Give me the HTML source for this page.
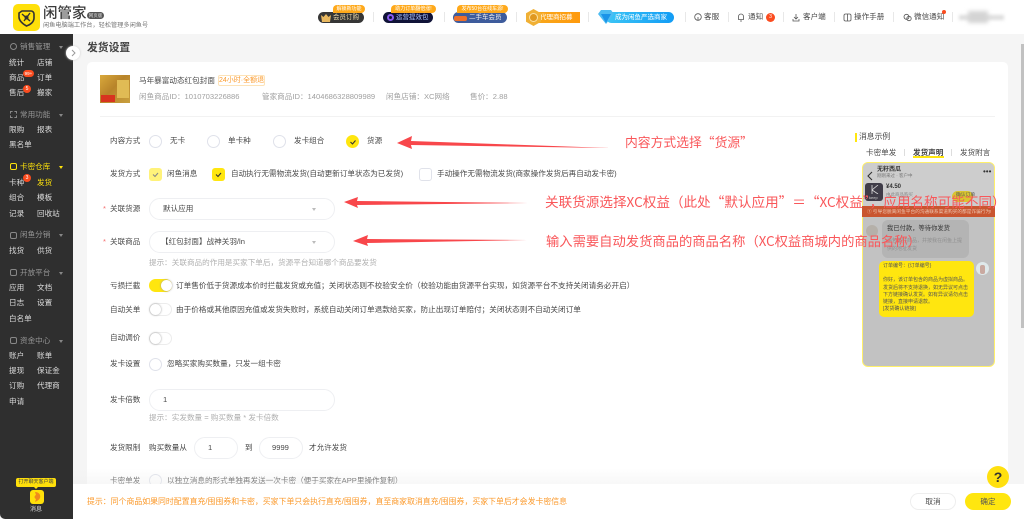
<!DOCTYPE html>
<html lang="zh"><head><meta charset="utf-8"><title>发货设置</title>
<style>
*{box-sizing:border-box;margin:0;padding:0}
html,body{width:1024px;height:519px;overflow:hidden;background:#f5f5f5}
body{position:relative;font-family:"Liberation Sans","Noto Sans CJK SC",sans-serif;font-size:7.6px;color:#484848;filter:blur(.3px)}
.a,.t{position:absolute}
.t{white-space:nowrap;line-height:10px}
.s{color:#b0b0b0}.g{color:#a0a0a0}
.side .t{color:#dcdcdc}
.side .h{color:#969696}
.car{position:absolute;width:0;height:0;border-left:2.5px solid transparent;border-right:2.5px solid transparent;border-top:3px solid #888}
.r{position:absolute;width:13px;height:13px;border-radius:50%;border:1px solid #dfe1ea;background:#fff}
.c{position:absolute;width:13px;height:13px;border-radius:3px}
.c svg,.r svg{position:absolute;left:2px;top:2px}
.i{position:absolute;height:22px;border:1px solid #eeeff2;border-radius:11px;background:#fff}
.sw{position:absolute;width:23px;height:13px;border-radius:7px;border:1px solid #ececec;background:#fff}
.sw b{position:absolute;left:0;top:0;width:11px;height:11px;border-radius:50%;background:#fff;box-shadow:0 0 2px #999}
.sw.on{background:#ffe60f;border-color:#ffe60f}.sw.on b{left:11px}
.sep{position:absolute;top:12px;width:1px;height:10px;background:#e8e8e8}
.tag{position:absolute;height:8px;border-radius:4px 4px 4px 0;background:#ffa91a;color:#fff;font-size:5px;line-height:8px;text-align:center;white-space:nowrap}
.pill{position:absolute;height:11px;border-radius:6px;color:#eee;font-size:6.5px;line-height:11px;white-space:nowrap}
.red{color:#f9575a;font-family:"Noto Sans CJK SC",sans-serif;font-size:13.4px;line-height:16px;position:absolute;white-space:nowrap}
.car2{position:absolute;width:0;height:0;border-left:2.5px solid transparent;border-right:2.5px solid transparent;border-top:3px solid #bbb}
</style></head><body>

<!-- header -->
<div class="a" style="left:0;top:0;width:1024px;height:34px;background:#fff"></div>
<div class="a" style="left:13px;top:4px;width:27px;height:27px;border-radius:5px;background:#ffe00a"></div>
<svg class="a" style="left:17px;top:8px" width="19" height="19" viewBox="0 0 19 19" fill="none" stroke="#333" stroke-width="1.6"><path d="M5 3h9a3 3 0 0 1 3 3v4c0 4-4 7-7.500 8C6 16 2 13 2 9V5Z"/><path d="M5 6l8 7M13 5l-6 8" stroke-width="1.400"/><circle cx="9.500" cy="9.500" r="2" fill="#333" stroke="none"/></svg>
<div class="t" style="left:43px;top:5px;font-size:14.500px;line-height:18px;color:#3a3a3a;font-weight:500">闲管家</div>
<div class="a" style="left:87px;top:12px;width:17px;height:7px;border-radius:4px;background:#555;color:#ddd;font-size:4.500px;line-height:7px;text-align:center">网页版</div>
<div class="t" style="left:43px;top:21px;font-size:6.200px;color:#777">闲鱼电脑端工作台，轻松管理多闲鱼号</div>

<div class="pill" style="left:318px;top:12px;width:46px;background:#363636;padding-left:15px;color:#e8d5a8">会员订购</div>
<svg class="a" style="left:321px;top:14px" width="10" height="8" viewBox="0 0 10 8"><path d="M0 1l2.500 2L5 0l2.500 3L10 1 9 8H1Z" fill="#e8b860"/></svg>
<div class="tag" style="left:333px;top:5px;width:32px">解锁新功能</div>
<div class="sep" style="left:373px"></div>
<div class="pill" style="left:383px;top:12px;width:50px;background:#101338;padding-left:13px;color:#a9c4ff">运营提效包</div>
<div class="a" style="left:387px;top:14px;width:7px;height:7px;border-radius:50%;border:2px solid #8a5cf0"></div>
<div class="tag" style="left:391px;top:5px;width:45px">助力订单翻倍涨!</div>
<div class="sep" style="left:444px"></div>
<div class="pill" style="left:453px;top:12px;width:54px;background:#3e5c9c;padding-left:16px">二手车会员</div>
<div class="a" style="left:454px;top:16px;width:13px;height:5px;border-radius:2px;background:#ee6f2a"></div>
<div class="tag" style="left:457px;top:5px;width:51px">发布50台在线车源!</div>
<div class="sep" style="left:516px"></div>
<div class="a" style="left:533px;top:12px;width:47px;height:11px;background:linear-gradient(90deg,#f7a81c,#ff9a0d);color:#fff;font-size:6.500px;line-height:11px;padding-left:7px;white-space:nowrap">代理商招募</div>
<svg class="a" style="left:525px;top:9px" width="17" height="17" viewBox="0 0 17 17"><path d="M8.500 0l7.500 4.200v8.600L8.500 17 1 12.800V4.200Z" fill="#f0b035"/><circle cx="8.500" cy="8.500" r="4" fill="#e09820" stroke="#fbe1a5"/></svg>
<div class="sep" style="left:588px"></div>
<div class="a" style="left:606px;top:12px;width:68px;height:11px;border-radius:6px;background:linear-gradient(90deg,#3cc5f5,#129cf5);color:#fff;font-size:6.500px;line-height:11px;padding-left:9px;white-space:nowrap">成为闲鱼严选商家</div>
<svg class="a" style="left:598px;top:10px" width="16" height="14" viewBox="0 0 16 14"><path d="M3 0h10l3 4-8 10L0 4Z" fill="#4dbcf2"/><path d="M3 4h10L8 13Z" fill="#1b94e8"/></svg>
<div class="sep" style="left:685px"></div>

<svg class="a" style="left:694px;top:13px" width="8" height="9" viewBox="0 0 8 9" fill="none" stroke="#555" stroke-width=".8"><circle cx="4" cy="4" r="3.300"/><path d="M4 4v3"/></svg>
<div class="t" style="left:704px;top:12px;font-size:7.600px">客服</div>
<div class="sep" style="left:728px"></div>
<svg class="a" style="left:737px;top:13px" width="8" height="9" viewBox="0 0 8 9" fill="none" stroke="#555" stroke-width=".8"><path d="M1.500 6.500V3.500a2.500 2.500 0 0 1 5 0v3ZM3 8h2"/></svg>
<div class="t" style="left:748px;top:12px">通知</div>
<div class="a" style="left:766px;top:13px;width:9px;height:9px;border-radius:50%;background:#fb4c1f;color:#fff;font-size:5px;line-height:9px;text-align:center">3</div>
<div class="sep" style="left:783px"></div>
<svg class="a" style="left:792px;top:13px" width="8" height="9" viewBox="0 0 8 9" fill="none" stroke="#555" stroke-width=".8"><path d="M4 1v5M2 4l2 2 2-2M1 6v2h6V6"/></svg>
<div class="t" style="left:803px;top:12px">客户端</div>
<div class="sep" style="left:834px"></div>
<svg class="a" style="left:843px;top:13px" width="9" height="9" viewBox="0 0 9 9" fill="none" stroke="#555" stroke-width=".8"><rect x="1" y="1" width="7" height="7" rx="1.500"/><path d="M4.500 1v7"/></svg>
<div class="t" style="left:854px;top:12px">操作手册</div>
<div class="sep" style="left:893px"></div>
<svg class="a" style="left:903px;top:13px" width="9" height="9" viewBox="0 0 9 9" fill="none" stroke="#555" stroke-width=".8"><circle cx="3.500" cy="3.800" r="2.500"/><circle cx="6" cy="5.500" r="2.200"/></svg>
<div class="t" style="left:914px;top:12px">微信通知</div>
<div class="a" style="left:942px;top:10px;width:4px;height:4px;border-radius:50%;background:#fb4c1f"></div>
<div class="sep" style="left:952px"></div>
<div class="a" style="left:959px;top:15px;width:45px;height:5px;background:#ddd;filter:blur(1.500px)"></div>
<div class="a" style="left:968px;top:11px;width:20px;height:12px;background:#d4d4d4;filter:blur(2px)"></div>

<!-- sidebar -->
<div class="a side" style="left:0;top:34px;width:73px;height:485px;background:#2f2f2f;border-bottom-left-radius:5px">
</div>
<div class="side">
<div class="a" style="left:10px;top:43px;width:7px;height:7px;border:1px solid #888;border-radius:50%"></div>
<div class="t h" style="left:20px;top:42px">销售管理</div><div class="car" style="left:59px;top:46px"></div>
<div class="t" style="left:9px;top:58px">统计</div><div class="t" style="left:37px;top:58px">店铺</div>
<div class="t" style="left:9px;top:73px">商品</div><div class="t" style="left:37px;top:73px">订单</div>
<div class="t" style="left:9px;top:88px">售后</div><div class="t" style="left:37px;top:88px">搬家</div>
<div class="a" style="left:23px;top:70px;width:11px;height:7px;border-radius:4px;background:#fb4c1f;color:#fff;font-size:4.500px;line-height:7px;text-align:center">99+</div>
<div class="a" style="left:23px;top:85px;width:8px;height:8px;border-radius:50%;background:#fb4c1f;color:#fff;font-size:5px;line-height:8px;text-align:center">5</div>

<div class="a" style="left:10px;top:111px;width:7px;height:7px;border:1px dashed #888"></div>
<div class="t h" style="left:20px;top:110px">常用功能</div><div class="car" style="left:59px;top:114px"></div>
<div class="t" style="left:9px;top:125px">限购</div><div class="t" style="left:37px;top:125px">报表</div>
<div class="t" style="left:9px;top:140px">黑名单</div>

<div class="a" style="left:10px;top:163px;width:7px;height:7px;border:1px solid #ffe30b;border-radius:2px"></div>
<div class="t" style="left:20px;top:162px;color:#ffe30b">卡密仓库</div><div class="car" style="left:59px;top:166px;border-top-color:#ffe30b"></div>
<div class="t" style="left:9px;top:178px">卡种</div><div class="t" style="left:37px;top:178px;color:#ffe30b">发货</div>
<div class="a" style="left:23px;top:174px;width:8px;height:8px;border-radius:50%;background:#fb4c1f;color:#fff;font-size:5px;line-height:8px;text-align:center">3</div>
<div class="t" style="left:9px;top:193px">组合</div><div class="t" style="left:37px;top:193px">模板</div>
<div class="t" style="left:9px;top:209px">记录</div><div class="t" style="left:37px;top:209px">回收站</div>

<div class="a" style="left:10px;top:232px;width:7px;height:7px;border:1px solid #888;border-radius:2px"></div>
<div class="t h" style="left:20px;top:230px">闲鱼分销</div><div class="car" style="left:59px;top:234px"></div>
<div class="t" style="left:9px;top:246px">找货</div><div class="t" style="left:37px;top:246px">供货</div>

<div class="a" style="left:10px;top:269px;width:7px;height:7px;border:1px solid #888;border-radius:2px"></div>
<div class="t h" style="left:20px;top:268px">开放平台</div><div class="car" style="left:59px;top:272px"></div>
<div class="t" style="left:9px;top:283px">应用</div><div class="t" style="left:37px;top:283px">文档</div>
<div class="t" style="left:9px;top:298px">日志</div><div class="t" style="left:37px;top:298px">设置</div>
<div class="t" style="left:9px;top:314px">白名单</div>

<div class="a" style="left:10px;top:337px;width:7px;height:7px;border:1px solid #888;border-radius:2px"></div>
<div class="t h" style="left:20px;top:336px">资金中心</div><div class="car" style="left:59px;top:340px"></div>
<div class="t" style="left:9px;top:351px">账户</div><div class="t" style="left:37px;top:351px">账单</div>
<div class="t" style="left:9px;top:366px">提现</div><div class="t" style="left:37px;top:366px">保证金</div>
<div class="t" style="left:9px;top:381px">订购</div><div class="t" style="left:37px;top:381px">代理商</div>
<div class="t" style="left:9px;top:397px">申请</div>

<div class="a" style="left:16px;top:478px;width:40px;height:9px;border-radius:2px;background:#ffe00a;color:#444;font-size:5px;line-height:9px;text-align:center;white-space:nowrap">打开聊天客户端</div>
<div class="a" style="left:34px;top:487px;width:0;height:0;border-left:2px solid transparent;border-right:2px solid transparent;border-top:2px solid #ffe00a"></div>
<div class="a" style="left:30px;top:490px;width:14px;height:14px;border-radius:3px;background:#ffe00a"></div>
<svg class="a" style="left:32px;top:491px" width="10" height="12" viewBox="0 0 10 12"><path d="M3 1c4 0 6 3 5 6-1 2-3 3-5 4l1-3C2 7 2 5 4 4Z" fill="#f08a1d"/></svg>
<div class="t" style="left:30px;top:505px;font-size:6px;color:#ddd">消息</div>
</div>
<div class="a" style="left:66px;top:46px;width:14px;height:14px;border-radius:50%;background:#fff;box-shadow:0 0 2px #ccc"></div>
<svg class="a" style="left:71px;top:49px" width="5" height="8" viewBox="0 0 5 8" fill="none" stroke="#999" stroke-width="1"><path d="M1 1l3 3-3 3"/></svg>

<!-- main -->
<div class="t" style="left:87px;top:41px;font-size:10.800px;line-height:14px;font-weight:700;color:#444">发货设置</div>
<div class="a" style="left:87px;top:62px;width:921px;height:440px;background:#fff;border-radius:5px"></div>

<!-- product -->
<div class="a" style="left:100px;top:75px;width:30px;height:28px;background:linear-gradient(135deg,#d9a93c,#b8842a 45%,#c9a03f)"></div>
<div class="a" style="left:101px;top:95px;width:14px;height:7px;background:#d8331f"></div>
<div class="a" style="left:117px;top:80px;width:12px;height:18px;background:#e0bb55"></div>
<div class="t" style="left:139px;top:76px">马年暴富动态红包封面</div>
<div class="a" style="left:218px;top:75px;width:47px;height:11px;border:1px solid #fde3b8;border-radius:2px;color:#fb9a2c;font-size:7px;line-height:9px;text-align:center;white-space:nowrap">24小时·全额退</div>
<div class="t g" style="left:139px;top:92px">闲鱼商品ID：1010703226886</div>
<div class="t g" style="left:262px;top:92px">管家商品ID：1404686328809989</div>
<div class="t g" style="left:386px;top:92px">闲鱼店铺：XC网络</div>
<div class="t g" style="left:470px;top:92px">售价：2.88</div>
<div class="a" style="left:100px;top:116px;width:895px;height:1px;background:#f2f2f2"></div>

<!-- form -->
<div class="t" style="left:110px;top:136px">内容方式</div>
<div class="r" style="left:149px;top:135px"></div><div class="t" style="left:170px;top:136px">无卡</div>
<div class="r" style="left:207px;top:135px"></div><div class="t" style="left:228px;top:136px">单卡种</div>
<div class="r" style="left:273px;top:135px"></div><div class="t" style="left:294px;top:136px">发卡组合</div>
<div class="r" style="left:346px;top:135px;background:#ffe60f;border-color:#ffe60f"><svg width="8" height="8" viewBox="0 0 8 8" fill="none" stroke="#333" stroke-width="1.100"><path d="M1.500 4l2 2 3-3.500"/></svg></div><div class="t" style="left:367px;top:136px">货源</div>

<div class="t" style="left:110px;top:169px">发货方式</div>
<div class="c" style="left:149px;top:168px;background:#fff27a"><svg width="9" height="9" viewBox="0 0 9 9" fill="none" stroke="#888" stroke-width="1.100"><path d="M2 4.500l2 2 3-3.500"/></svg></div><div class="t" style="left:167px;top:169px">闲鱼消息</div>
<div class="c" style="left:212px;top:168px;background:#ffe60f"><svg width="9" height="9" viewBox="0 0 9 9" fill="none" stroke="#333" stroke-width="1.100"><path d="M2 4.500l2 2 3-3.500"/></svg></div><div class="t" style="left:231px;top:169px">自动执行无需物流发货(自动更新订单状态为已发货)</div>
<div class="c" style="left:419px;top:168px;background:#fff;border:1px solid #e0e2ea"></div><div class="t" style="left:437px;top:169px">手动操作无需物流发货(商家操作发货后再自动发卡密)</div>

<div class="t" style="left:103px;top:204px;color:#f56c6c">*</div><div class="t" style="left:110px;top:204px">关联货源</div>
<div class="i" style="left:149px;top:198px;width:186px"></div><div class="t" style="left:163px;top:204px">默认应用</div><div class="car2" style="left:312px;top:208px"></div>
<div class="t" style="left:103px;top:237px;color:#f56c6c">*</div><div class="t" style="left:110px;top:237px">关联商品</div>
<div class="i" style="left:149px;top:231px;width:186px"></div><div class="t" style="left:161px;top:237px">【红包封面】战神关羽/ln</div><div class="car2" style="left:312px;top:241px"></div>
<div class="t s" style="left:149px;top:258px">提示：关联商品的作用是买家下单后，货源平台知道哪个商品要发货</div>

<div class="t" style="left:110px;top:281px">亏损拦截</div>
<div class="sw on" style="left:149px;top:279px"><b></b></div>
<div class="t" style="left:176px;top:281px;font-size:7.650px">订单售价低于货源成本价时拦截发货或充值；关闭状态则不校验安全价（校验功能由货源平台实现，如货源平台不支持关闭请务必开启）</div>
<div class="t" style="left:110px;top:305px">自动关单</div>
<div class="sw" style="left:149px;top:303px"><b></b></div>
<div class="t" style="left:176px;top:305px;font-size:7.650px">由于价格或其他原因充值或发货失败时，系统自动关闭订单退款给买家，防止出现订单赔付；关闭状态则不自动关闭订单</div>
<div class="t" style="left:110px;top:333px">自动调价</div>
<div class="sw" style="left:149px;top:332px"><b></b></div>
<div class="t" style="left:110px;top:359px">发卡设置</div>
<div class="r" style="left:149px;top:358px"></div>
<div class="t" style="left:167px;top:359px">忽略买家购买数量，只发一组卡密</div>
<div class="t" style="left:110px;top:395px">发卡倍数</div>
<div class="i" style="left:149px;top:389px;width:186px"></div><div class="t" style="left:163px;top:395px">1</div>
<div class="t s" style="left:149px;top:413px">提示：实发数量 = 购买数量 * 发卡倍数</div>
<div class="t" style="left:110px;top:443px">发货限制</div>
<div class="t" style="left:149px;top:443px">购买数量从</div>
<div class="i" style="left:194px;top:437px;width:44px"></div><div class="t" style="left:208px;top:443px">1</div>
<div class="t" style="left:245px;top:443px">到</div>
<div class="i" style="left:259px;top:437px;width:44px"></div><div class="t" style="left:272px;top:443px">9999</div>
<div class="t" style="left:309px;top:443px">才允许发货</div>
<div class="t" style="left:110px;top:476px">卡密单发</div>
<div class="r" style="left:149px;top:474px"></div>
<div class="t" style="left:167px;top:476px">以独立消息的形式单独再发送一次卡密（便于买家在APP里操作复制）</div>

<!-- right preview -->
<div class="a" style="left:855px;top:133px;width:2px;height:9px;background:#ffe60f"></div>
<div class="t" style="left:859px;top:132px;font-size:7.800px">消息示例</div>
<div class="t" style="left:866px;top:148px">卡密单发</div>
<div class="t" style="left:913px;top:148px;font-weight:700;color:#444">发货声明</div>
<div class="a" style="left:913px;top:156px;width:31px;height:2px;background:#ffe60f"></div>
<div class="t" style="left:960px;top:148px">发货附言</div>
<div class="a" style="left:904px;top:149px;width:1px;height:7px;background:#ddd"></div>
<div class="a" style="left:951px;top:149px;width:1px;height:7px;background:#ddd"></div>
<div class="a" style="left:862px;top:162px;width:133px;height:205px;background:#c2c2c2;border:1px solid #fff06a;border-radius:6px"></div>
<div class="a" style="left:863px;top:163px;width:131px;height:43px;background:#cdcdcd;border-radius:5px 5px 0 0"></div>
<svg class="a" style="left:867px;top:171px" width="6" height="10" viewBox="0 0 6 10" fill="none" stroke="#333" stroke-width="1.100"><path d="M5 1L1 5l4 4"/></svg>
<div class="t" style="left:877px;top:165px;font-size:6px;color:#333;font-weight:700">无籽西瓜</div>
<div class="t" style="left:877px;top:171px;font-size:4.500px;color:#777">刚刚来过 · 客户中</div>
<div class="t" style="left:983px;top:167px;font-size:8px;color:#333">•••</div>
<div class="a" style="left:865px;top:183px;width:18px;height:18px;border-radius:3px;background:#3f3c48"></div>
<svg class="a" style="left:870px;top:185px" width="9" height="9" viewBox="0 0 9 9" fill="none" stroke="#ddd" stroke-width=".8"><path d="M2 0v9M8 0L2 5l6 4"/></svg>
<div class="t" style="left:869px;top:193px;font-size:4px;color:#ccc">keep</div>
<div class="t" style="left:886px;top:182px;font-size:6px;color:#333;font-weight:700">¥4.50</div>
<div class="t" style="left:886px;top:190px;font-size:4.500px;color:#888">由此商品购买</div>
<div class="a" style="left:952px;top:191px;width:21px;height:11px;border-radius:6px;background:#d9c530"></div>
<div class="t" style="left:956px;top:191px;font-size:4.800px;color:#555">确认订单</div>
<div class="a" style="left:862px;top:206px;width:133px;height:11px;background:#c9552f"></div>
<div class="t" style="left:867px;top:207px;font-size:4.700px;color:#eec7b2">① 引导您脱离闲鱼平台的沟通联系渠道购买的都是诈骗行为!</div>
<div class="a" style="left:866px;top:225px;width:12px;height:12px;border-radius:50%;background:#b5b0a9"></div>
<div class="a" style="left:882px;top:220px;width:87px;height:38px;border-radius:6px;background:#b4b4b4"></div>
<div class="t" style="left:887px;top:224px;font-size:6.300px;color:#333">我已付款，等待你发货</div>
<div class="t" style="left:887px;top:236px;font-size:5px;color:#8f8f8f">请包装好商品，并按我在闲鱼上提</div>
<div class="t" style="left:887px;top:244px;font-size:5px;color:#8f8f8f">供的地址发货</div>
<div class="a" style="left:879px;top:261px;width:95px;height:56px;background:#ffe60f;border-radius:5px"></div>
<div class="a" style="left:976px;top:262px;width:13px;height:13px;border-radius:50%;background:#dfe9ea"></div>
<div class="a" style="left:980px;top:265px;width:5px;height:9px;background:#c9a9a0;border-radius:2px"></div>
<div class="t" style="left:883px;top:263px;font-size:5px;color:#555;line-height:7.200px;white-space:pre">订单编号：{订单编号}

你好，该订单包含的商品为虚拟商品。
发货后将不支持退换，如无异议可点击
下方链接确认发货。如有异议请勿点击
链接，直接申请退款。
[发货确认链接]</div>

<!-- bottom bar -->
<div class="a" style="left:73px;top:468px;width:935px;height:16px;background:linear-gradient(rgba(255,255,255,0),rgba(238,238,238,.45))"></div>
<div class="a" style="left:73px;top:484px;width:951px;height:35px;background:#fff"></div>
<div class="t" style="left:87px;top:497px;color:#fb9a2c;font-size:7.900px">提示：同个商品如果同时配置直充/囤囤券和卡密，买家下单只会执行直充/囤囤券，直至商家取消直充/囤囤券，买家下单后才会发卡密信息</div>
<div class="a" style="left:910px;top:493px;width:46px;height:17px;border:1px solid #eee;border-radius:9px;text-align:center;line-height:15px;background:#fff">取消</div>
<div class="a" style="left:965px;top:493px;width:46px;height:17px;border-radius:9px;text-align:center;line-height:17px;background:#ffe60f;color:#555">确定</div>
<div class="a" style="left:987px;top:466px;width:22px;height:22px;border-radius:50%;background:#ffe00f;color:#333;font-size:14px;line-height:22px;font-weight:700;text-align:center">?</div>

<!-- scrollbar -->
<div class="a" style="left:1021px;top:44px;width:3px;height:284px;background:#c1c1c1"></div>

<!-- annotations -->
<svg class="a" style="left:0;top:0" width="1024" height="519">
<polygon points="397,143 412,136 411,141 610,148 411,145 412,149" fill="#f8474b"/>
<polygon points="344,202 358,197 357,201 528,203 357,205 358,208" fill="#f8474b"/>
<polygon points="353,241 368,235 367,239 527,240 367,243 368,246" fill="#f8474b"/>
</svg>
<div class="red" style="left:625px;top:134px;font-size:12.800px">内容方式选择“货源”</div>
<div class="red" style="left:545px;top:193px;font-size:13.600px">关联货源选择XC权益（此处“默认应用”＝“XC权益”，应用名称可能不同）</div>
<div class="red" style="left:546px;top:233px;font-size:13.300px">输入需要自动发货商品的商品名称（XC权益商城内的商品名称）</div>
</body></html>
